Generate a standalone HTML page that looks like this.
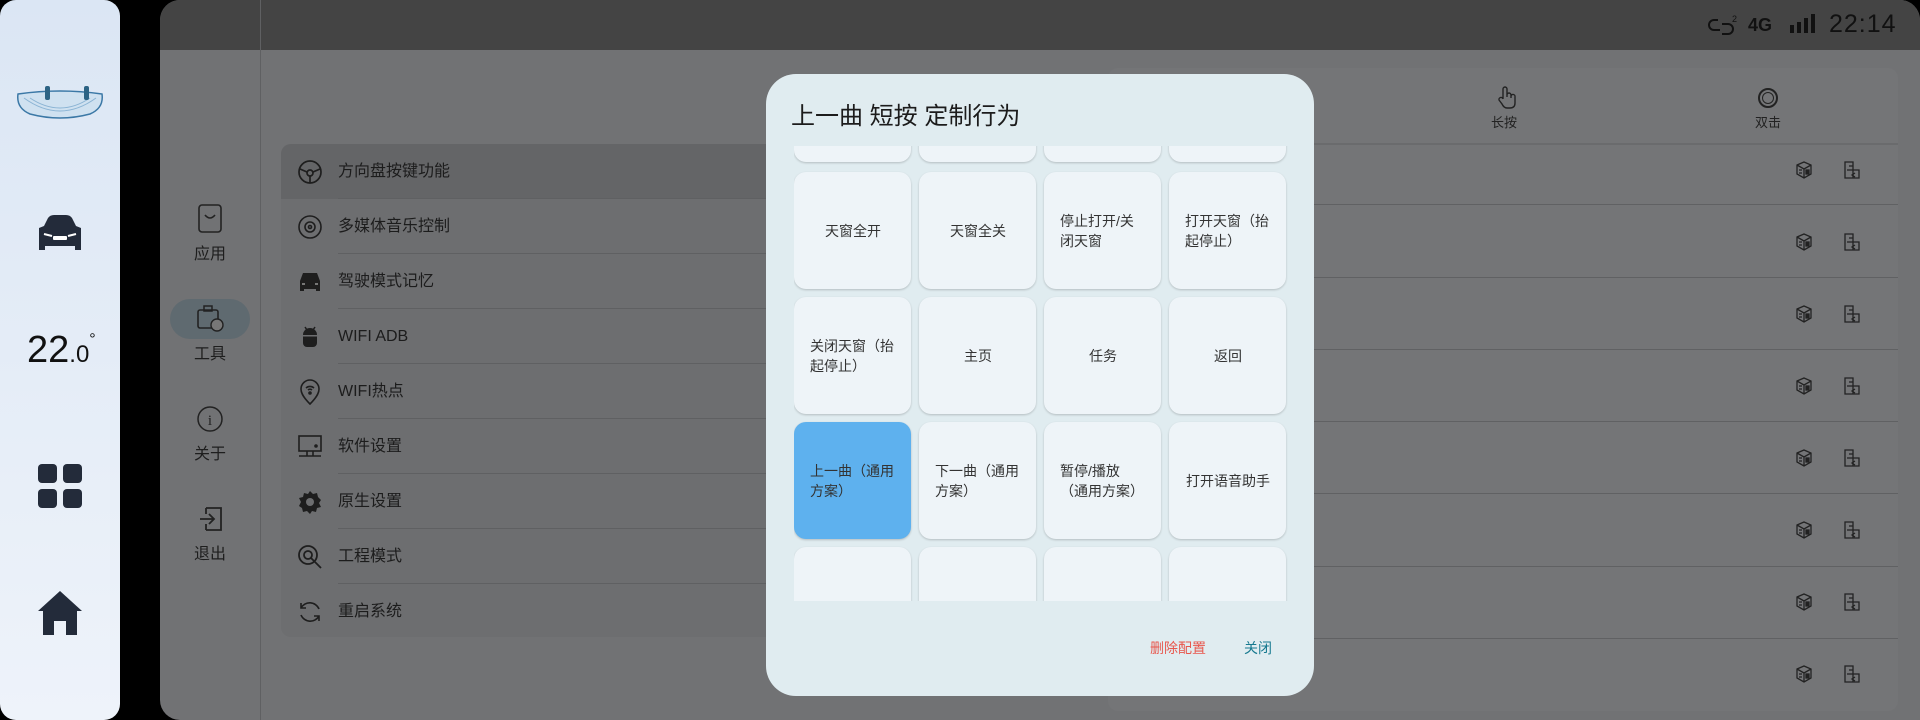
<!DOCTYPE html><html><head><meta charset="utf-8"><style>
*{margin:0;padding:0;box-sizing:border-box}
body{width:1920px;height:720px;background:#000;position:relative;overflow:hidden;font-family:"Liberation Sans","Noto Sans CJK SC",sans-serif}
.abs{position:absolute}
#side{left:0;top:0;width:120px;height:720px;border-radius:16px;background:linear-gradient(#dbe6f4,#eef3fa)}
#main{left:160px;top:0;width:1760px;height:720px;background:#717274;border-radius:20px 20px 0 20px;overflow:hidden}
#top{left:0;top:0;width:1760px;height:50px;background:#444}
.nav{color:#1e1e1e;font-size:16px;text-align:center;width:100px;left:160px;line-height:20px}
.row{left:281px;width:520px;height:55px}
.row span{position:absolute;left:57px;top:18px;font-size:16px;color:#1c1c1c;line-height:20px}
.row i{position:absolute;left:57px;right:0;bottom:0;height:1px;background:#5f6062}
.row svg{position:absolute;left:16px;top:15px}
.trow{left:1110px;width:788px;height:1px;background:#606163}
#dlg{left:766px;top:74px;width:548px;height:622px;background:#e0ecf0;border-radius:30px;overflow:hidden}
.card{position:absolute;width:117px;height:117px;border-radius:12px;background:#eef4f8;box-shadow:0 1px 2px rgba(0,0,0,.2);font-size:14px;color:#333;display:flex;align-items:center;justify-content:center;line-height:20px;padding:0 15px 0 16px}
.card.l{justify-content:flex-start}
</style></head><body>
<div id="side" class="abs">
<svg class="abs" style="left:16px;top:84px" width="88" height="38" viewBox="0 0 88 38"><path d="M2 10 Q44 4 86 10 Q88 24 74 30 Q44 38 14 30 Q0 24 2 10Z" fill="#cfe1f0" stroke="#3b78a6" stroke-width="1.5"/><path d="M8 14 Q44 40 80 14 M14 14 Q44 34 74 14" fill="none" stroke="#8bb4d4"/><rect x="29" y="2" width="5" height="14" rx="2" fill="#2c6384"/><rect x="68" y="2" width="5" height="14" rx="2" fill="#2c6384"/></svg>
<svg class="abs" style="left:36px;top:214px" width="48" height="38" viewBox="0 0 48 38"><path d="M3 14 L8 12 L12 4 Q14 1 18 1 L30 1 Q34 1 36 4 L40 12 L45 14 L45 36 L39 36 L39 32 L9 32 L9 36 L3 36Z" fill="#232b3a"/><path d="M8 20 L16 22 M40 20 L32 22" stroke="#fff" stroke-width="2"/><rect x="17" y="22" width="14" height="4" rx="1" fill="#fff"/></svg>
<div class="abs" style="left:27px;top:328px;font-size:38px;color:#111;line-height:44px">22<span style="font-size:24px">.0</span><span style="font-size:16px;position:relative;top:-18px">°</span></div>
<svg class="abs" style="left:38px;top:464px" width="44" height="44"><rect x="0" y="0" width="19" height="19" rx="4" fill="#232b3a"/><rect x="25" y="0" width="19" height="19" rx="4" fill="#232b3a"/><rect x="0" y="25" width="19" height="19" rx="4" fill="#232b3a"/><rect x="25" y="25" width="19" height="19" rx="4" fill="#232b3a"/></svg>
<svg class="abs" style="left:37px;top:589px" width="46" height="46" viewBox="0 0 46 46"><path d="M23 2 L45 22 L40 22 L40 46 L29 46 L29 32 L17 32 L17 46 L6 46 L6 22 L1 22Z" fill="#232b3a"/></svg>
</div>
<div id="main" class="abs">
<div id="top" class="abs"></div>
<div class="abs" style="left:100px;top:0;width:1px;height:720px;background:#5f6062"></div>
</div>
<svg class="abs" style="left:1708px;top:14px" width="30" height="22" fill="none" stroke="#111" stroke-width="2"><path d="M10 6 H6 A5 5 0 0 0 6 16 H12 M14 10 H20 A5 5 0 0 1 20 20 H14"/><text x="24" y="8" font-size="9" fill="#111" stroke="none" font-family="Liberation Sans">2</text></svg>
<div class="abs" style="left:1748px;top:15px;color:#111;font-size:18px;font-weight:bold">4G</div>
<svg class="abs" style="left:1790px;top:14px" width="26" height="20"><rect x="0" y="11" width="4" height="8" fill="#111"/><rect x="7" y="8" width="4" height="11" fill="#111"/><rect x="14" y="4" width="4" height="15" fill="#111"/><rect x="21" y="0" width="4" height="19" fill="#111"/></svg>
<div class="abs" style="left:1829px;top:10px;color:#111;font-size:25px;letter-spacing:1px">22:14</div>
<svg class="abs" style="left:198px;top:204px" width="24" height="30"><rect x="1" y="1" width="22" height="27" rx="3" fill="none" stroke="#222" stroke-width="1.6"/><path d="M7 11 Q12 17 17 11" fill="none" stroke="#222" stroke-width="1.6"/></svg>
<div class="abs nav" style="top:245px">应用</div>
<div class="abs" style="left:170px;top:299px;width:80px;height:40px;border-radius:20px;background:#5f6a70"></div>
<svg class="abs" style="left:196px;top:304px" width="28" height="28"><rect x="2" y="6" width="20" height="18" rx="2" fill="none" stroke="#222" stroke-width="1.6"/><rect x="8" y="2" width="8" height="5" fill="none" stroke="#222" stroke-width="1.5"/><circle cx="21" cy="21" r="6" fill="#777" stroke="#222" stroke-width="1.4"/></svg>
<div class="abs nav" style="top:345px">工具</div>
<svg class="abs" style="left:196px;top:405px" width="28" height="28"><circle cx="14" cy="14" r="12" fill="none" stroke="#222" stroke-width="1.5"/><text x="14" y="20" font-size="15" text-anchor="middle" font-family="Liberation Serif" fill="#222">i</text></svg>
<div class="abs nav" style="top:445px">关于</div>
<svg class="abs" style="left:198px;top:506px" width="26" height="26"><path d="M8 2 H23 V24 H8 M8 8 V2 M8 24 V18 M2 13 H16 M11 8 L16 13 L11 18" fill="none" stroke="#222" stroke-width="1.8"/></svg>
<div class="abs nav" style="top:545px">退出</div>
<div class="abs" style="left:281px;top:144px;width:520px;height:493px;background:#6d6e70;border-radius:10px"></div>
<div class="abs" style="left:281px;top:144px;width:520px;height:55px;background:#646567;border-radius:10px 10px 0 0"></div>
<div class="abs row" style="top:144px"><svg width="26" height="26" fill="none" stroke="#1e1e1e" stroke-width="1.7"><circle cx="13" cy="13" r="11"/><circle cx="13" cy="14" r="3"/><path d="M3 10 L10 13 M16 13 L23 10 M13 17 V24"/></svg><span>方向盘按键功能</span><i></i></div>
<div class="abs row" style="top:199px"><svg width="26" height="26" fill="none" stroke="#1e1e1e" stroke-width="1.6"><circle cx="13" cy="13" r="11"/><circle cx="13" cy="13" r="5"/><circle cx="13" cy="13" r="1.5"/></svg><span>多媒体音乐控制</span><i></i></div>
<div class="abs row" style="top:254px"><svg width="26" height="26"><path d="M3 12 L6 4 H20 L23 12 V22 H19 V20 H7 V22 H3Z" fill="#1e1e1e"/><rect x="5" y="14" width="3" height="2" fill="#777"/><rect x="18" y="14" width="3" height="2" fill="#777"/></svg><span>驾驶模式记忆</span><i></i></div>
<div class="abs row" style="top:309px"><svg width="26" height="26"><path d="M6 11 A7 7 0 0 1 20 11 V19 A4 4 0 0 1 16 23 H10 A4 4 0 0 1 6 19Z" fill="#1e1e1e"/><path d="M8 3 L10 6 M18 3 L16 6" stroke="#1e1e1e" stroke-width="1.5"/><rect x="6" y="11" width="14" height="1.5" fill="#6d6e70"/></svg><span>WIFI ADB</span><i></i></div>
<div class="abs row" style="top:364px"><svg width="26" height="26" fill="none" stroke="#1e1e1e" stroke-width="1.6"><path d="M13 25 C5 17 4 13 4 10 A9 9 0 0 1 22 10 C22 13 21 17 13 25Z"/><path d="M9 9 A6 6 0 0 1 17 9 M11 11 A3 3 0 0 1 15 11"/><circle cx="13" cy="14" r="1" fill="#1e1e1e"/></svg><span>WIFI热点</span><i></i></div>
<div class="abs row" style="top:419px"><svg width="26" height="26" fill="none" stroke="#1e1e1e" stroke-width="1.6"><rect x="2" y="2" width="22" height="15"/><path d="M2 22 H24 M10 17 V22 M16 17 V22"/><circle cx="19" cy="12" r="1" fill="#1e1e1e"/></svg><span>软件设置</span><i></i></div>
<div class="abs row" style="top:474px"><svg width="26" height="26"><path d="M13 2 L16 5 L20 4 L21 8 L24 11 L22 14 L24 18 L20 19 L19 23 L15 22 L13 25 L10 22 L6 23 L5 19 L2 17 L4 13 L2 9 L6 8 L7 4 L11 5Z" fill="#1e1e1e"/><circle cx="13" cy="13" r="4" fill="#6d6e70"/></svg><span>原生设置</span><i></i></div>
<div class="abs row" style="top:529px"><svg width="26" height="26" fill="none" stroke="#1e1e1e" stroke-width="1.8"><circle cx="11" cy="11" r="9"/><circle cx="11" cy="11" r="4"/><path d="M14 14 L24 24"/></svg><span>工程模式</span><i></i></div>
<div class="abs row" style="top:584px"><svg width="26" height="26" fill="none" stroke="#1e1e1e" stroke-width="1.6"><path d="M22 10 A10 10 0 0 0 4 9 M4 16 A10 10 0 0 0 22 17 M4 4 V9 H9 M22 22 V17 H17"/></svg><span>重启系统</span></div>
<div class="abs" style="left:1108px;top:68px;width:790px;height:643px;background:#747577;border-radius:10px"></div>
<svg class="abs" style="left:1496px;top:85px" width="22" height="24" fill="none" stroke="#222" stroke-width="1.4"><path d="M7 14 V4 A2 2 0 0 1 11 4 V12 M11 10 A2 2 0 0 1 15 10 V13 M15 11 A2 2 0 0 1 19 12 V18 Q19 23 14 23 H11 Q8 23 6 19 L3 15 A2 2 0 0 1 7 14"/></svg>
<div class="abs" style="left:1491px;top:112px;font-size:13px;color:#222">长按</div>
<div class="abs" style="left:1758px;top:88px;width:20px;height:20px;border:2px solid #222;border-radius:50%"></div>
<div class="abs" style="left:1762px;top:92px;width:12px;height:12px;border:1.5px solid #222;border-radius:50%"></div>
<div class="abs" style="left:1755px;top:112px;font-size:13px;color:#222">双击</div>
<div class="abs trow" style="top:143px;height:2px;background:#6a6b6d"></div><div class="abs trow" style="top:204px"></div><div class="abs trow" style="top:277px"></div><div class="abs trow" style="top:349px"></div><div class="abs trow" style="top:421px"></div><div class="abs trow" style="top:493px"></div><div class="abs trow" style="top:566px"></div><div class="abs trow" style="top:638px"></div>
<svg class="abs" style="left:1795px;top:161px" width="80" height="530" fill="none" stroke="#222" stroke-width="1.3">
<g id="ic"><path d="M2 4 L9 1 L16 4 V13 L9 17 L2 13Z M2 4 L9 8 L16 4 M9 8 V17"/><path d="M4 9 H7 M4 12 H7"/><rect x="11" y="9" width="3" height="4" fill="#222"/><path d="M50 1 H58 V17 H50Z M54 5 H58 M52 9 H64 V17 H58 M60 12 L57 14 L60 16"/></g>
<use href="#ic" y="72"/><use href="#ic" y="144"/><use href="#ic" y="216"/><use href="#ic" y="288"/><use href="#ic" y="360"/><use href="#ic" y="432"/><use href="#ic" y="504"/>
</svg>
<div id="dlg" class="abs">
<div class="abs" style="left:25px;top:22px;font-size:24px;color:#1c1c1c">上一曲 短按 定制行为</div>
<div class="abs" style="left:28px;top:72px;width:500px;height:455px;overflow:hidden">
<div class="card" style="left:0;top:-101px"></div><div class="card" style="left:125px;top:-101px"></div><div class="card" style="left:250px;top:-101px"></div><div class="card" style="left:375px;top:-101px"></div>
<div class="card" style="left:0;top:26px">天窗全开</div><div class="card" style="left:125px;top:26px">天窗全关</div><div class="card l" style="left:250px;top:26px">停止打开/关闭天窗</div><div class="card l" style="left:375px;top:26px">打开天窗（抬起停止）</div>
<div class="card l" style="left:0;top:151px">关闭天窗（抬起停止）</div><div class="card" style="left:125px;top:151px">主页</div><div class="card" style="left:250px;top:151px">任务</div><div class="card" style="left:375px;top:151px">返回</div>
<div class="card l" style="left:0;top:276px;background:#5eb1ee">上一曲（通用方案）</div><div class="card l" style="left:125px;top:276px">下一曲（通用方案）</div><div class="card l" style="left:250px;top:276px">暂停/播放（通用方案）</div><div class="card" style="left:375px;top:276px">打开语音助手</div>
<div class="card" style="left:0;top:401px"></div><div class="card" style="left:125px;top:401px"></div><div class="card" style="left:250px;top:401px"></div><div class="card" style="left:375px;top:401px"></div>
</div>
<div class="abs" style="left:384px;top:564px;font-size:14px;color:#e8574d">删除配置</div>
<div class="abs" style="left:478px;top:564px;font-size:14px;color:#16798f">关闭</div>
</div>
</body></html>
